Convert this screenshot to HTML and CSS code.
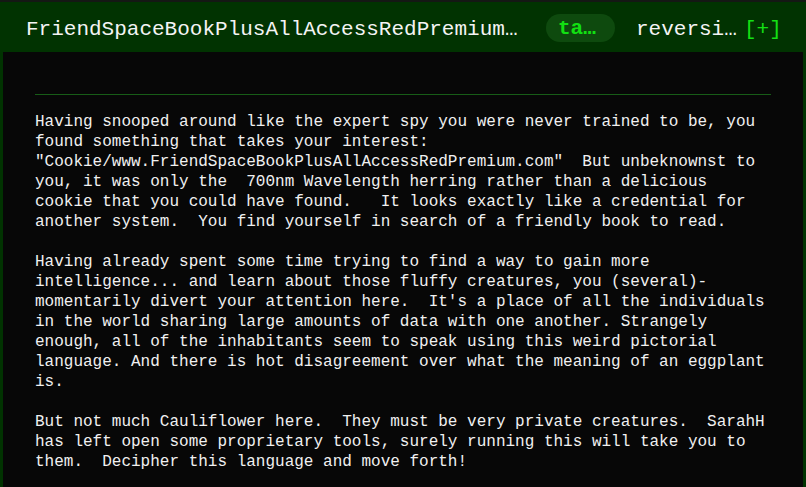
FILE: index.html
```html
<!DOCTYPE html>
<html>
<head>
<meta charset="utf-8">
<link rel="stylesheet" href="styles.css">
</head>
<body>
<div class="topline"></div>
<header class="tabs">
  <span class="tab tab-title">FriendSpaceBookPlusAllAccessRedPremium…</span>
  <span class="pill"><span class="pill-text">ta…</span></span>
  <span class="tab tab-rev">reversi…</span>
  <span class="add">[+]</span>
</header>
<main class="panel">
  <hr class="rule">
  <div class="story">Having snooped around like the expert spy you were never trained to be, you
found something that takes your interest:
"Cookie/www.FriendSpaceBookPlusAllAccessRedPremium.com"  But unbeknownst to
you, it was only the  700nm Wavelength herring rather than a delicious
cookie that you could have found.   It looks exactly like a credential for
another system.  You find yourself in search of a friendly book to read.

Having already spent some time trying to find a way to gain more
intelligence... and learn about those fluffy creatures, you (several)-
momentarily divert your attention here.  It's a place of all the individuals
in the world sharing large amounts of data with one another. Strangely
enough, all of the inhabitants seem to speak using this weird pictorial
language. And there is hot disagreement over what the meaning of an eggplant
is.

But not much Cauliflower here.  They must be very private creatures.  SarahH
has left open some proprietary tools, surely running this will take you to
them.  Decipher this language and move forth!</div>
</main>
</body>
</html>
```
FILE: styles.css
```css
html, body {
  margin: 0;
  padding: 0;
  height: 100%;
}
body {
  background: #013301;
  display: flex;
  flex-direction: column;
  overflow: hidden;
}
.topline {
  height: 2px;
  background: #141814;
  flex: none;
}
.tabs {
  box-sizing: border-box;
  height: 50px;
  flex: none;
  display: flex;
  align-items: center;
  padding: 5px 0 0 26px;
  font-family: "Liberation Mono", monospace;
  font-size: 21px;
  color: #f4f4f4;
  white-space: nowrap;
}
.tab {
  white-space: nowrap;
}
.tab-title {
  width: 495px;
}
.pill {
  margin-left: 25px;
  margin-top: -3px;
  height: 28px;
  border-radius: 14px;
  background: #0e4a0e;
  padding: 0 12px;
  display: flex;
  align-items: center;
}
.pill-text {
  width: 45px;
  color: #12e012;
  font-weight: bold;
}
.tab-rev {
  margin-left: 21px;
  width: 101px;
}
.add {
  color: #14e014;
  margin-left: 7px;
}
.panel {
  flex: 1;
  margin: 0 3px;
  background: #070707;
  padding: 42px 32px 0;
}
.rule {
  margin: 0;
  border: 0;
  height: 1px;
  background: #175c17;
}
.story {
  margin-top: 17px;
  font-family: "Liberation Mono", monospace;
  font-size: 16px;
  line-height: 20px;
  color: #f0f0f0;
  white-space: pre;
}
```
